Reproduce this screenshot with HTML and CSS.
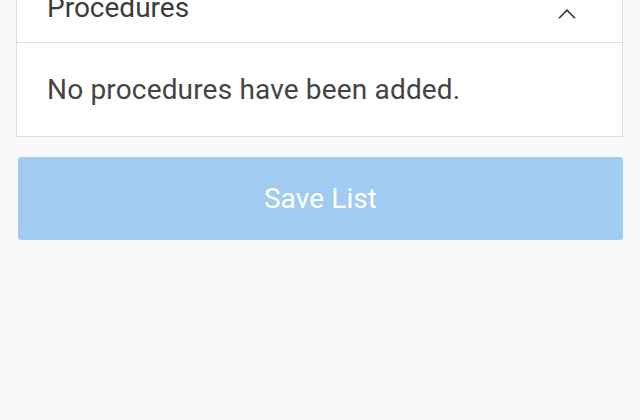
FILE: index.html
```html
<!DOCTYPE html>
<html lang="en">
<head>
<meta charset="utf-8">
<title>Procedures</title>
<link rel="stylesheet" href="styles.css">
</head>
<body>
<main class="page">
  <section class="card">
    <header class="card-header">
      <h2 class="card-title">Procedures</h2>
      <svg class="chevron" width="18" height="10" viewBox="0 0 18 10" aria-hidden="true">
        <path d="M1 9.2 L9 1.2 L17 9.2" fill="none" stroke="#333" stroke-width="1.6"/>
      </svg>
    </header>
    <div class="card-body">
      <p class="empty">No procedures have been added.</p>
    </div>
  </section>
  <button class="save-btn" type="button" disabled>Save List</button>
</main>
</body>
</html>
```

FILE: styles.css
```css
html, body {
  margin: 0;
  padding: 0;
  background: #f9f9f9;
}

body {
  font-family: Roboto, "Noto Sans", "Liberation Sans", sans-serif;
  color: #424242;
}

.page {
  display: flex;
  flex-direction: column;
  padding: 0 17px 0 16px;
}

.card {
  margin-top: -27px;
  background: #ffffff;
  border: 1px solid #dedede;
}

.card-header {
  display: flex;
  align-items: center;
  justify-content: space-between;
  height: 68px;
  padding: 0 46px 0 30px;
  border-bottom: 1px solid #dedede;
}

.card-title {
  margin: 0;
  font-size: 28px;
  font-weight: 400;
  line-height: 32px;
  color: #3c3c3c;
}

.chevron {
  display: block;
  margin-top: 11px;
}

.card-body {
  padding: 30px;
  height: 33px;
}

.empty {
  margin: 0;
  font-size: 28px;
  line-height: 33px;
  letter-spacing: 0.17px;
  color: #444444;
}

.save-btn {
  margin: 20px 0 0 2px;
  height: 83px;
  border: none;
  border-radius: 3px;
  background: #a1cbf1;
  color: #ffffff;
  font-family: inherit;
  font-size: 28px;
  letter-spacing: 0.1px;
  cursor: default;
}
```
